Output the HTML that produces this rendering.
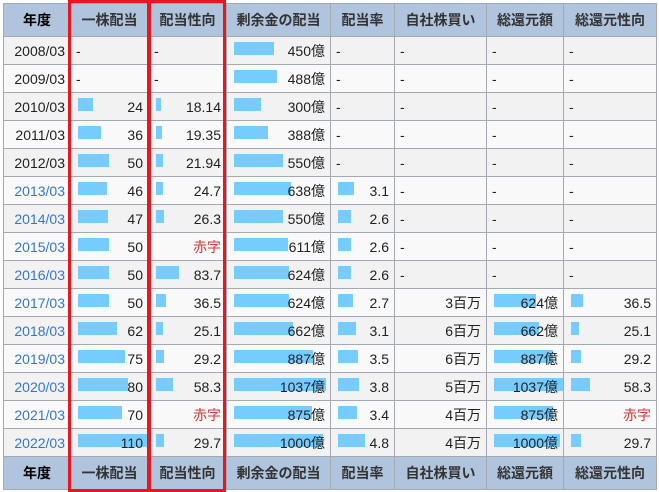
<!DOCTYPE html>
<html><head><meta charset="utf-8"><style>
body{margin:0;background:#fff;width:659px;height:492px;overflow:hidden;position:relative;font-family:"Liberation Sans","Noto Sans CJK JP",sans-serif;font-size:14px;color:#202122}
table{position:absolute;left:3px;top:3px;border-collapse:collapse;table-layout:fixed}
tr{height:28px}
tr.h{height:33px}
td,th{border:1px solid #a2a9b1;padding:0 5px;white-space:nowrap;line-height:16px}
th{background:#b0c4de;font-weight:bold;color:#333;font-size:14px}
th.y{color:#000}
tr:nth-child(odd) td{background:#f9f9f9}
tr:nth-child(even) td{background:#f2f2f2}
td{text-align:right;position:relative}
td.l{text-align:left}
a{color:#3377cc;text-decoration:none}
.b{position:absolute;left:7px;top:5px;height:13px;background:#77ccff}
.r{color:#d33}
span{position:relative}
.box{position:absolute;border:3px solid #e8161e;top:0;height:486px;box-sizing:content-box}
</style></head><body>
<table>
<colgroup><col style="width:67px"><col style="width:78px"><col style="width:78px"><col style="width:104px"><col style="width:64px"><col style="width:92px"><col style="width:77px"><col style="width:93px"></colgroup>
<tr class="h"><th class="y">年度</th><th>一株配当</th><th>配当性向</th><th>剰余金の配当</th><th>配当率</th><th>自社株買い</th><th>総還元額</th><th>総還元性向</th></tr>
<tr><td>2008/03</td><td class="l">-</td><td class="l">-</td><td><i class="b" style="width:40px"></i><span>450億</span></td><td class="l">-</td><td class="l">-</td><td class="l">-</td><td class="l">-</td></tr>
<tr><td>2009/03</td><td class="l">-</td><td class="l">-</td><td><i class="b" style="width:43px"></i><span>488億</span></td><td class="l">-</td><td class="l">-</td><td class="l">-</td><td class="l">-</td></tr>
<tr><td>2010/03</td><td><i class="b" style="width:15px"></i><span>24</span></td><td><i class="b" style="width:5px"></i><span>18.14</span></td><td><i class="b" style="width:27px"></i><span>300億</span></td><td class="l">-</td><td class="l">-</td><td class="l">-</td><td class="l">-</td></tr>
<tr><td>2011/03</td><td><i class="b" style="width:23px"></i><span>36</span></td><td><i class="b" style="width:6px"></i><span>19.35</span></td><td><i class="b" style="width:34px"></i><span>388億</span></td><td class="l">-</td><td class="l">-</td><td class="l">-</td><td class="l">-</td></tr>
<tr><td>2012/03</td><td><i class="b" style="width:31px"></i><span>50</span></td><td><i class="b" style="width:7px"></i><span>21.94</span></td><td><i class="b" style="width:49px"></i><span>550億</span></td><td class="l">-</td><td class="l">-</td><td class="l">-</td><td class="l">-</td></tr>
<tr><td><a>2013/03</a></td><td><i class="b" style="width:29px"></i><span>46</span></td><td><i class="b" style="width:7px"></i><span>24.7</span></td><td><i class="b" style="width:57px"></i><span>638億</span></td><td><i class="b" style="width:16px"></i><span>3.1</span></td><td class="l">-</td><td class="l">-</td><td class="l">-</td></tr>
<tr><td><a>2014/03</a></td><td><i class="b" style="width:30px"></i><span>47</span></td><td><i class="b" style="width:8px"></i><span>26.3</span></td><td><i class="b" style="width:49px"></i><span>550億</span></td><td><i class="b" style="width:13px"></i><span>2.6</span></td><td class="l">-</td><td class="l">-</td><td class="l">-</td></tr>
<tr><td><a>2015/03</a></td><td><i class="b" style="width:31px"></i><span>50</span></td><td><span class="r">赤字</span></td><td><i class="b" style="width:54px"></i><span>611億</span></td><td><i class="b" style="width:13px"></i><span>2.6</span></td><td class="l">-</td><td class="l">-</td><td class="l">-</td></tr>
<tr><td><a>2016/03</a></td><td><i class="b" style="width:31px"></i><span>50</span></td><td><i class="b" style="width:23px"></i><span>83.7</span></td><td><i class="b" style="width:55px"></i><span>624億</span></td><td><i class="b" style="width:13px"></i><span>2.6</span></td><td class="l">-</td><td class="l">-</td><td class="l">-</td></tr>
<tr><td><a>2017/03</a></td><td><i class="b" style="width:31px"></i><span>50</span></td><td><i class="b" style="width:10px"></i><span>36.5</span></td><td><i class="b" style="width:55px"></i><span>624億</span></td><td><i class="b" style="width:15px"></i><span>2.7</span></td><td>3百万</td><td><i class="b" style="width:42px"></i><span>624億</span></td><td><i class="b" style="width:12px"></i><span>36.5</span></td></tr>
<tr><td><a>2018/03</a></td><td><i class="b" style="width:39px"></i><span>62</span></td><td><i class="b" style="width:7px"></i><span>25.1</span></td><td><i class="b" style="width:59px"></i><span>662億</span></td><td><i class="b" style="width:18px"></i><span>3.1</span></td><td>6百万</td><td><i class="b" style="width:45px"></i><span>662億</span></td><td><i class="b" style="width:8px"></i><span>25.1</span></td></tr>
<tr><td><a>2019/03</a></td><td><i class="b" style="width:47px"></i><span>75</span></td><td><i class="b" style="width:8px"></i><span>29.2</span></td><td><i class="b" style="width:79px"></i><span>887億</span></td><td><i class="b" style="width:20px"></i><span>3.5</span></td><td>6百万</td><td><i class="b" style="width:59px"></i><span>887億</span></td><td><i class="b" style="width:10px"></i><span>29.2</span></td></tr>
<tr><td><a>2020/03</a></td><td><i class="b" style="width:50px"></i><span>80</span></td><td><i class="b" style="width:17px"></i><span>58.3</span></td><td><i class="b" style="width:92px"></i><span>1037億</span></td><td><i class="b" style="width:21px"></i><span>3.8</span></td><td>5百万</td><td><i class="b" style="width:69px"></i><span>1037億</span></td><td><i class="b" style="width:19px"></i><span>58.3</span></td></tr>
<tr><td><a>2021/03</a></td><td><i class="b" style="width:44px"></i><span>70</span></td><td><span class="r">赤字</span></td><td><i class="b" style="width:78px"></i><span>875億</span></td><td><i class="b" style="width:19px"></i><span>3.4</span></td><td>4百万</td><td><i class="b" style="width:59px"></i><span>875億</span></td><td><span class="r">赤字</span></td></tr>
<tr><td><a>2022/03</a></td><td><i class="b" style="width:70px"></i><span>110</span></td><td><i class="b" style="width:8px"></i><span>29.7</span></td><td><i class="b" style="width:89px"></i><span>1000億</span></td><td><i class="b" style="width:27px"></i><span>4.8</span></td><td>4百万</td><td><i class="b" style="width:66px"></i><span>1000億</span></td><td><i class="b" style="width:10px"></i><span>29.7</span></td></tr>
<tr class="h"><th class="y">年度</th><th>一株配当</th><th>配当性向</th><th>剰余金の配当</th><th>配当率</th><th>自社株買い</th><th>総還元額</th><th>総還元性向</th></tr>
</table>
<div class="box" style="left:68px;width:76px"></div>
<div class="box" style="left:148px;width:72px"></div>
</body></html>
